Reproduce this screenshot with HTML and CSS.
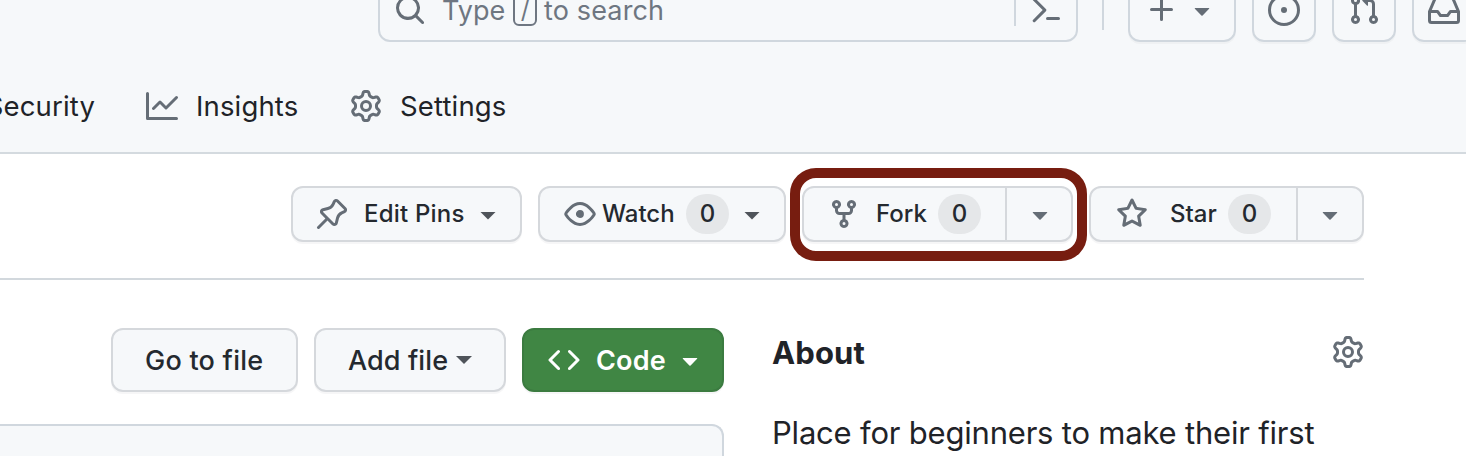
FILE: index.html
```html
<!DOCTYPE html>
<html lang="en">
<head>
<meta charset="utf-8">
<title>Repository</title>
<link rel="stylesheet" href="styles.css">
</head>
<body>
<svg class="defs" width="0" height="0">
  <symbol id="gear" viewBox="0 0 16 16"><path d="M8 0a8.2 8.2 0 0 1 .701.031C9.444.095 9.99.645 10.16 1.29l.288 1.107c.018.066.079.158.212.224.231.114.454.243.668.386.123.082.233.09.299.071l1.103-.303c.644-.176 1.392.021 1.82.63.27.385.506.792.704 1.218.315.675.111 1.422-.364 1.891l-.814.806c-.049.048-.098.147-.088.294.016.257.016.515 0 .772-.01.147.038.246.088.294l.814.806c.475.469.679 1.216.364 1.891a7.977 7.977 0 0 1-.704 1.217c-.428.61-1.176.807-1.82.63l-1.102-.302c-.067-.019-.177-.011-.3.071a5.909 5.909 0 0 1-.668.386c-.133.066-.194.158-.211.224l-.29 1.106c-.168.646-.715 1.196-1.458 1.26a8.006 8.006 0 0 1-1.402 0c-.743-.064-1.289-.614-1.458-1.26l-.289-1.106c-.018-.066-.079-.158-.212-.224a5.738 5.738 0 0 1-.668-.386c-.123-.082-.233-.09-.299-.071l-1.103.303c-.644.176-1.392-.021-1.82-.63a8.12 8.12 0 0 1-.704-1.218c-.315-.675-.111-1.422.363-1.891l.815-.806c.05-.048.098-.147.088-.294a6.214 6.214 0 0 1 0-.772c.01-.147-.038-.246-.088-.294l-.815-.806C.635 6.045.431 5.298.746 4.623a7.92 7.92 0 0 1 .704-1.217c.428-.61 1.176-.807 1.82-.63l1.102.302c.067.019.177.011.3-.071.214-.143.437-.272.668-.386.133-.066.194-.158.211-.224l.29-1.106C6.009.645 6.556.095 7.299.03 7.53.01 7.764 0 8 0Zm-.571 1.525c-.036.003-.108.036-.137.146l-.289 1.105c-.147.561-.549.967-.998 1.189-.173.086-.34.183-.5.29-.417.278-.97.423-1.529.27l-1.103-.303c-.109-.03-.175.016-.195.045-.22.312-.412.644-.573.99-.014.031-.021.11.059.19l.815.806c.411.406.562.957.53 1.456a4.709 4.709 0 0 0 0 .582c.032.499-.119 1.05-.53 1.456l-.815.806c-.081.08-.073.159-.059.19.162.346.353.677.573.989.02.03.085.076.195.046l1.102-.303c.56-.153 1.113-.008 1.53.27.161.107.328.204.501.29.447.222.85.629.997 1.189l.289 1.105c.029.109.101.143.137.146a6.6 6.6 0 0 0 1.142 0c.036-.003.108-.036.137-.146l.289-1.105c.147-.561.549-.967.998-1.189.173-.086.34-.183.5-.29.417-.278.97-.423 1.529-.27l1.103.303c.109.029.175-.016.195-.045.22-.313.411-.644.573-.99.014-.031.021-.11-.059-.19l-.815-.806c-.411-.406-.562-.957-.53-1.456a4.709 4.709 0 0 0 0-.582c-.032-.499.119-1.05.53-1.456l.815-.806c.081-.08.073-.159.059-.19a6.464 6.464 0 0 0-.573-.989c-.02-.03-.085-.076-.195-.046l-1.102.303c-.56.153-1.113.008-1.53-.27a4.44 4.44 0 0 0-.501-.29c-.447-.222-.85-.629-.997-1.189l-.289-1.105c-.029-.11-.101-.143-.137-.146a6.6 6.6 0 0 0-1.142 0ZM11 8a3 3 0 1 1-6 0 3 3 0 0 1 6 0ZM9.5 8a1.5 1.5 0 1 0-3.001.001A1.5 1.5 0 0 0 9.5 8Z"/></symbol>
  <symbol id="triangle" viewBox="0 0 16 16"><path d="m4.427 7.427 3.396 3.396a.25.25 0 0 0 .354 0l3.396-3.396A.25.25 0 0 0 11.396 7H4.604a.25.25 0 0 0-.177.427Z"/></symbol>
</svg>

<header class="header">
  <div class="topbar">
    <div class="search">
      <svg class="icon" viewBox="0 0 16 16"><path d="M10.68 11.74a6 6 0 0 1-7.922-8.982 6 6 0 0 1 8.982 7.922l3.04 3.04a.749.749 0 0 1-.326 1.275.749.749 0 0 1-.734-.215ZM11.5 7a4.499 4.499 0 1 0-8.997 0A4.499 4.499 0 0 0 11.5 7Z"/></svg>
      <span class="search-type">Type</span>
      <kbd class="slash">/</kbd>
      <span class="search-rest">to search</span>
      <span class="search-divider"></span>
      <svg class="icon" viewBox="0 0 16 16"><path d="m6.354 8.04-4.773 4.773a.75.75 0 1 0 1.061 1.06L7.945 8.57a.75.75 0 0 0 0-1.06L2.642 2.206a.75.75 0 0 0-1.06 1.061L6.353 8.04ZM8.75 11.5a.75.75 0 0 0 0 1.5h5.5a.75.75 0 0 0 0-1.5h-5.5Z"/></svg>
    </div>
    <span class="bar-divider"></span>
    <div class="tools">
      <div class="tool tool-new">
        <svg class="icon" viewBox="0 0 16 16"><path d="M7.75 2a.75.75 0 0 1 .75.75V7h4.25a.75.75 0 0 1 0 1.5H8.5v4.25a.75.75 0 0 1-1.5 0V8.5H2.75a.75.75 0 0 1 0-1.5H7V2.75A.75.75 0 0 1 7.75 2Z"/></svg>
        <svg class="icon"><use href="#triangle"/></svg>
      </div>
      <div class="tool"><svg class="icon" viewBox="0 0 16 16"><path d="M8 9.5a1.5 1.5 0 1 0 0-3 1.5 1.5 0 0 0 0 3Z"/><path d="M8 0a8 8 0 1 1 0 16A8 8 0 0 1 8 0ZM1.5 8a6.5 6.5 0 1 0 13 0 6.5 6.5 0 0 0-13 0Z"/></svg></div>
      <div class="tool"><svg class="icon" viewBox="0 0 16 16"><path d="M1.5 3.25a2.25 2.25 0 1 1 3 2.122v5.256a2.251 2.251 0 1 1-1.5 0V5.372A2.25 2.25 0 0 1 1.5 3.25Zm5.677-.177L9.573.677A.25.25 0 0 1 10 .854V2.5h1A2.5 2.5 0 0 1 13.5 5v5.628a2.251 2.251 0 1 1-1.5 0V5a1 1 0 0 0-1-1h-1v1.646a.25.25 0 0 1-.427.177L7.177 3.427a.25.25 0 0 1 0-.354ZM3.75 2.5a.75.75 0 1 0 0 1.5.75.75 0 0 0 0-1.5Zm0 9.5a.75.75 0 1 0 0 1.5.75.75 0 0 0 0-1.5Zm8.25.75a.75.75 0 1 0 1.5 0 .75.75 0 0 0-1.5 0Z"/></svg></div>
      <div class="tool"><svg class="icon" viewBox="0 0 16 16"><path d="M2.8 2.06A1.75 1.75 0 0 1 4.41 1h7.18c.7 0 1.333.417 1.61 1.06l2.74 6.395c.04.093.06.194.06.295v4.5A1.75 1.75 0 0 1 14.25 15H1.75A1.75 1.75 0 0 1 0 13.25v-4.5c0-.101.02-.202.06-.295Zm1.61.44a.25.25 0 0 0-.23.152L1.887 8H4.75a.75.75 0 0 1 .6.3L6.625 10h2.75l1.275-1.7a.75.75 0 0 1 .6-.3h2.863L11.82 2.652a.25.25 0 0 0-.23-.152Zm10.09 7h-2.875l-1.275 1.7a.75.75 0 0 1-.6.3h-3.5a.75.75 0 0 1-.6-.3L4.375 9.5H1.5v3.75c0 .138.112.25.25.25h12.5a.25.25 0 0 0 .25-.25Z"/></svg></div>
    </div>
  </div>
  <nav class="tabs">
    <div class="tab tab-security"><span>Security</span></div>
    <div class="tab tab-insights">
      <svg class="icon" viewBox="0 0 16 16"><path d="M1.5 1.75V13.5h13.75a.75.75 0 0 1 0 1.5H.75a.75.75 0 0 1-.75-.75V1.75a.75.75 0 0 1 1.5 0Zm14.28 2.53-5.25 5.25a.75.75 0 0 1-1.06 0L7 7.06 4.28 9.78a.751.751 0 0 1-1.042-.018.751.751 0 0 1-.018-1.042l3.25-3.25a.75.75 0 0 1 1.06 0L10 7.94l4.72-4.72a.751.751 0 0 1 1.042.018.751.751 0 0 1 .018 1.042Z"/></svg>
      <span>Insights</span>
    </div>
    <div class="tab">
      <svg class="icon"><use href="#gear"/></svg>
      <span>Settings</span>
    </div>
  </nav>
</header>

<section class="actions">
  <div class="btn edit-pins">
    <svg class="icon" viewBox="0 0 16 16"><path d="m11.294.984 3.722 3.722a1.75 1.75 0 0 1-.504 2.826l-1.327.613a3.089 3.089 0 0 0-1.707 2.084l-.584 2.454c-.317 1.332-1.972 1.8-2.94.832L5.75 11.311 1.78 15.28a.749.749 0 1 1-1.06-1.06l3.969-3.97-2.204-2.204c-.968-.968-.5-2.623.832-2.94l2.454-.584a3.08 3.08 0 0 0 2.084-1.707l.613-1.327a1.75 1.75 0 0 1 2.826-.504ZM6.283 9.723l2.732 2.731a.25.25 0 0 0 .42-.119l.584-2.454a4.586 4.586 0 0 1 2.537-3.098l1.328-.613a.25.25 0 0 0 .072-.404l-3.722-3.722a.25.25 0 0 0-.404.072l-.613 1.328a4.584 4.584 0 0 1-3.098 2.537l-2.454.584a.25.25 0 0 0-.119.42l2.731 2.732Z"/></svg>
    <span class="label">Edit Pins</span>
    <i class="caret"></i>
  </div>
  <div class="btn watch">
    <svg class="icon" viewBox="0 0 16 16"><path d="M8 2c1.981 0 3.671.992 4.933 2.078 1.27 1.091 2.187 2.345 2.637 3.023a1.62 1.62 0 0 1 0 1.798c-.45.678-1.367 1.932-2.637 3.023C11.67 13.008 9.981 14 8 14c-1.981 0-3.671-.992-4.933-2.078C1.797 10.83.88 9.576.43 8.898a1.62 1.62 0 0 1 0-1.798c.45-.677 1.367-1.931 2.637-3.022C4.33 2.992 6.019 2 8 2ZM1.679 7.932a.12.12 0 0 0 0 .136c.411.622 1.241 1.75 2.366 2.717C5.176 11.758 6.527 12.5 8 12.5c1.473 0 2.825-.742 3.955-1.715 1.124-.967 1.954-2.096 2.366-2.717a.12.12 0 0 0 0-.136c-.412-.621-1.242-1.75-2.366-2.717C10.824 4.242 9.473 3.5 8 3.5c-1.473 0-2.825.742-3.955 1.715-1.124.967-1.954 2.096-2.366 2.717ZM8 10a2 2 0 1 1-.001-3.999A2 2 0 0 1 8 10Z"/></svg>
    <span class="label">Watch</span>
    <span class="count">0</span>
    <i class="caret"></i>
  </div>
  <div class="fork-wrap">
    <div class="btn fork">
      <svg class="icon" viewBox="0 0 16 16"><path d="M5 5.372v.878c0 .414.336.75.75.75h4.5a.75.75 0 0 0 .75-.75v-.878a2.25 2.25 0 1 1 1.5 0v.878a2.25 2.25 0 0 1-2.25 2.25h-1.5v2.128a2.251 2.251 0 1 1-1.5 0V8.5h-1.5A2.25 2.25 0 0 1 3.5 6.25v-.878a2.25 2.25 0 1 1 1.5 0ZM5 3.25a.75.75 0 1 0-1.5 0 .75.75 0 0 0 1.5 0Zm6.75.75a.75.75 0 1 0 0-1.5.75.75 0 0 0 0 1.5Zm-3 8.75a.75.75 0 1 0-1.5 0 .75.75 0 0 0 1.5 0Z"/></svg>
      <span class="label">Fork</span>
      <span class="count">0</span>
      <span class="split"><svg class="icon"><use href="#triangle"/></svg></span>
    </div>
  </div>
  <div class="btn star">
    <svg class="icon" viewBox="0 0 16 16"><path d="M8 .25a.75.75 0 0 1 .673.418l1.882 3.815 4.21.612a.75.75 0 0 1 .416 1.279l-3.046 2.97.719 4.192a.751.751 0 0 1-1.088.791L8 12.347l-3.766 1.98a.75.75 0 0 1-1.088-.79l.72-4.194L.818 6.374a.75.75 0 0 1 .416-1.28l4.21-.611L7.327.668A.75.75 0 0 1 8 .25Zm0 2.445L6.615 5.5a.75.75 0 0 1-.564.41l-3.097.45 2.24 2.184a.75.75 0 0 1 .216.664l-.528 3.084 2.769-1.456a.75.75 0 0 1 .698 0l2.77 1.456-.53-3.084a.75.75 0 0 1 .216-.664l2.24-2.183-3.096-.45a.75.75 0 0 1-.564-.41L8 2.694Z"/></svg>
    <span class="label">Star</span>
    <span class="count">0</span>
    <span class="split"><svg class="icon"><use href="#triangle"/></svg></span>
  </div>
</section>

<main class="content">
  <section class="files">
    <div class="file-actions">
      <div class="btn go"><span class="label">Go to file</span></div>
      <div class="btn add"><span class="label">Add file</span><i class="caret"></i></div>
      <div class="btn code">
        <svg class="icon" viewBox="0 0 16 16"><path d="m11.28 3.22 4.25 4.25a.75.75 0 0 1 0 1.06l-4.25 4.25a.749.749 0 0 1-1.275-.326.749.749 0 0 1 .215-.734L13.94 8l-3.72-3.72a.749.749 0 0 1 .326-1.275.749.749 0 0 1 .734.215Zm-6.56 0a.751.751 0 0 1 1.042.018.751.751 0 0 1 .018 1.042L2.06 8l3.72 3.72a.749.749 0 0 1-.326 1.275.749.749 0 0 1-.734-.215L.47 8.53a.75.75 0 0 1 0-1.06Z"/></svg>
        <span class="label">Code</span>
        <svg class="icon"><use href="#triangle"/></svg>
      </div>
    </div>
    <div class="file-box"></div>
  </section>
  <aside class="about">
    <div class="about-head">
      <h2>About</h2>
      <svg class="icon"><use href="#gear"/></svg>
    </div>
    <p>Place for beginners to make their first</p>
  </aside>
</main>
</body>
</html>
```
FILE: styles.css
```css
* { box-sizing: border-box; }

body {
  margin: 0;
  height: 456px;
  overflow: hidden;
  background: #fff;
  color: #1f2328;
  font-family: Inter, "Liberation Sans", sans-serif;
  font-size: 27px;
  white-space: nowrap;
}

.defs { display: none; }

.icon {
  flex: none;
  width: 32px;
  height: 32px;
  fill: #656d76;
}

/* Header */
.header {
  height: 154px;
  overflow: hidden;
  background: #f6f8fa;
  border-bottom: 2px solid #d4dadf;
}

.topbar {
  display: flex;
  align-items: center;
  height: 64px;
  margin-top: -22px;
  padding-left: 378px;
}

.search {
  flex: none;
  display: flex;
  align-items: center;
  width: 700px;
  height: 64px;
  padding-left: 14px;
  border: 2px solid #d0d7de;
  border-radius: 12px;
  color: #6e7681;
  font-weight: 420;
}

.search-type { width: 87px; padding-left: 16px; }

.slash {
  width: 24px;
  height: 32px;
  border: 2px solid #6e7681;
  border-radius: 6px;
  font: 24px/27px Inter, "Liberation Sans", sans-serif;
  text-align: center;
}

.search-rest { width: 477px; padding-left: 7px; letter-spacing: .15px; }

.search-divider {
  width: 2px;
  height: 32px;
  margin-right: 14px;
  background: #d0d7de;
}

.bar-divider {
  flex: none;
  width: 2px;
  height: 40px;
  margin: 0 24px;
  background: #d0d7de;
}

.tools { display: flex; gap: 16px; }

.tool {
  flex: none;
  display: flex;
  align-items: center;
  justify-content: center;
  width: 64px;
  height: 64px;
  border: 2px solid #d0d7de;
  border-radius: 12px;
  box-shadow: 0 2px 0 rgba(31, 35, 40, .03);
}

.tool-new { width: 108px; gap: 8px; }

.tabs {
  display: flex;
  align-items: center;
  height: 32px;
  margin-top: 48px;
  font-size: 27.5px;
  font-weight: 410;
  letter-spacing: .15px;
}

.tab {
  display: flex;
  align-items: center;
  gap: 18px;
}

.tab-security {
  width: 95px;
  margin-right: 51px;
  justify-content: flex-end;
}

.tab-insights { width: 204px; }

/* Buttons */
.btn {
  flex: none;
  display: flex;
  align-items: center;
  height: 56px;
  background: #f6f8fa;
  border: 2px solid #d5d8dc;
  border-radius: 12px;
  box-shadow: 0 2px 0 rgba(31, 35, 40, .04);
  color: #24292f;
  font-size: 24px;
  font-weight: 520;
}

.actions .label { padding-bottom: 1px; }

.caret {
  width: 16px;
  height: 8px;
  background: #4f545a;
  clip-path: polygon(0 0, 100% 0, 50% 100%);
}

.count {
  width: 43px;
  height: 40px;
  border-radius: 20px;
  background: #e5e7e9;
  line-height: 39px;
  text-align: center;
}

.split {
  display: flex;
  align-items: center;
  justify-content: center;
  height: 52px;
  border-left: 2px solid #d5d8dc;
}

.actions {
  display: flex;
  width: 1364px;
  height: 126px;
  padding: 14px 0 0 291px;
  border-bottom: 2px solid #d2d8dd;
}

.edit-pins,
.watch,
.star { margin-top: 18px; }

.edit-pins { width: 231px; padding-left: 23px; margin-right: 16px; }
.edit-pins .label { width: 132px; padding-left: 16px; letter-spacing: .2px; }
.edit-pins .caret,
.watch .caret { margin-top: 3px; }

.watch { width: 248px; padding-left: 24px; margin-right: 4px; }
.watch .label { width: 90px; padding-left: 6px; }
.watch .caret { margin-left: 15px; }

/* Highlighted button */
.fork-wrap {
  flex: none;
  width: 297px;
  height: 93px;
  padding: 8px 0 0 2px;
  border: 10px solid #771d10;
  border-radius: 26px;
  margin-right: 2px;
}

.fork { width: 271px; padding-left: 24px; }
.fork .label { width: 79px; padding-left: 16px; }
.fork .split { width: 67px; margin-left: 24px; }
.fork .split .icon { margin-left: 2px; }

.star { width: 275px; padding-left: 25px; }
.star .label { width: 80px; padding-left: 22px; }
.star .count { width: 44px; }
.star .split { width: 66px; margin-left: 25px; }

/* Content */
.content { display: flex; width: 1364px; }

.files { width: 724px; padding-top: 48px; }

.file-actions {
  display: flex;
  gap: 16px;
  padding-left: 111px;
}

.file-actions .btn { height: 64px; font-size: 27px; }

.go { width: 187px; padding-left: 32px; letter-spacing: .25px; }
.add { width: 192px; padding-left: 32px; }
.add .label { width: 108px; letter-spacing: .1px; }

.file-actions .code {
  width: 202px;
  padding-left: 24px;
  background: #408644;
  border-color: #3b7b40;
  color: #fff;
  font-weight: 600;
}

.code .icon { fill: #fff; }
.code .label { width: 94px; padding-left: 16px; padding-top: 1px; letter-spacing: .2px; }

.file-box {
  height: 40px;
  margin-top: 32px;
  border: 2px solid #d0d7de;
  border-width: 2px 2px 0 0;
  border-top-right-radius: 12px;
  background: #f6f8fa;
}

.about { width: 640px; padding: 56px 0 0 48px; }

.about-head {
  display: flex;
  align-items: center;
  justify-content: space-between;
  height: 32px;
}

.about h2 {
  margin: 0;
  font-size: 31px;
  font-weight: 650;
  letter-spacing: .1px;
}

.about p {
  margin: 45px 0 0;
  font-size: 31px;
  line-height: 40px;
  letter-spacing: -.2px;
}
```
